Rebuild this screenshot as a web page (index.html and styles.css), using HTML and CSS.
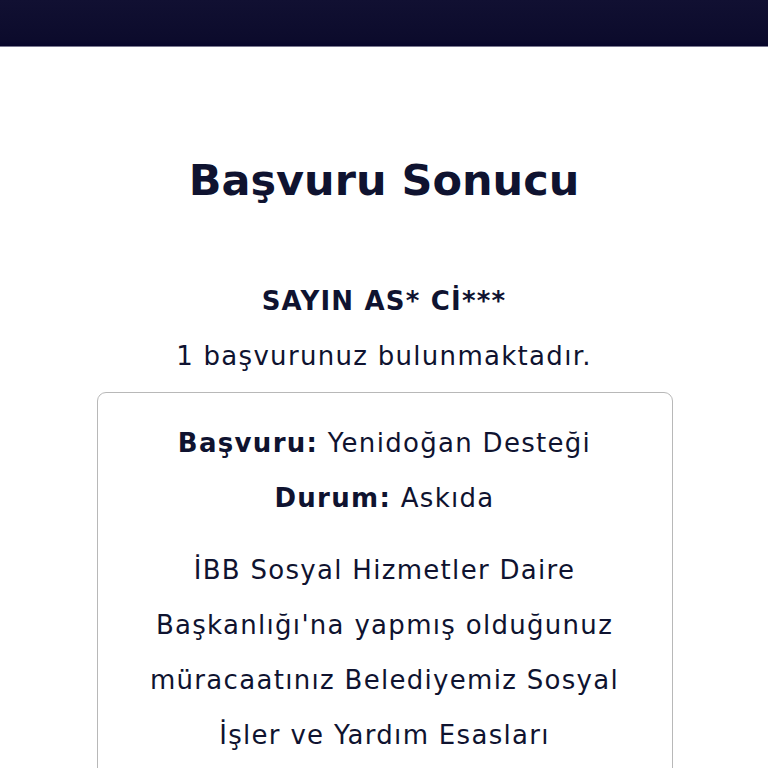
FILE: index.html
```html
<!DOCTYPE html>
<html lang="tr">
<head>
<meta charset="utf-8">
<title>Başvuru Sonucu</title>
<link rel="stylesheet" href="styles.css">
</head>
<body>
<header class="topbar"></header>
<main class="content">
  <h1 class="title">Başvuru Sonucu</h1>
  <p class="name">SAYIN AS* Cİ***</p>
  <p class="count">1 başvurunuz bulunmaktadır.</p>
  <section class="card">
    <p class="row"><strong>Başvuru:</strong> Yenidoğan Desteği</p>
    <p class="row"><strong>Durum:</strong> Askıda</p>
    <p class="desc">İBB Sosyal Hizmetler Daire<br>Başkanlığı'na yapmış olduğunuz<br>müracaatınız Belediyemiz Sosyal<br>İşler ve Yardım Esasları</p>
  </section>
</main>
</body>
</html>
```
FILE: styles.css
```css
html, body {
  margin: 0;
  padding: 0;
  background: #ffffff;
  overflow: hidden;
}
body {
  font-family: "DejaVu Sans", "Inter", sans-serif;
  color: #0f1330;
}
.topbar {
  height: 46px;
  background: linear-gradient(180deg, #111032 0%, #0c0b2c 85%, #06052a 100%);
  border-bottom: 1px solid #7a7890;
}
.content {
  display: flex;
  flex-direction: column;
  align-items: center;
  text-align: center;
}
.title {
  margin: 103px 0 0;
  font-size: 43px;
  line-height: 60px;
  font-weight: 700;
}
.name {
  margin: 71px 0 0;
  font-size: 26px;
  line-height: 40px;
  font-weight: 700;
  letter-spacing: 1.2px;
}
.count {
  margin: 15px 0 0;
  font-size: 26px;
  line-height: 40px;
  font-weight: 400;
  letter-spacing: 1.3px;
}
.card {
  box-sizing: border-box;
  width: 576px;
  margin: 16px 0 0 1px;
  padding: 23px 10px 0;
  border: 1.5px solid #b8b8b8;
  border-radius: 9px;
  min-height: 420px;
  letter-spacing: 1.3px;
}
.row {
  margin: 0;
  font-size: 26px;
  line-height: 55px;
}
.row strong {
  font-weight: 700;
}
.desc {
  margin: 17px 0 0;
  font-size: 26px;
  line-height: 55px;
}
```
